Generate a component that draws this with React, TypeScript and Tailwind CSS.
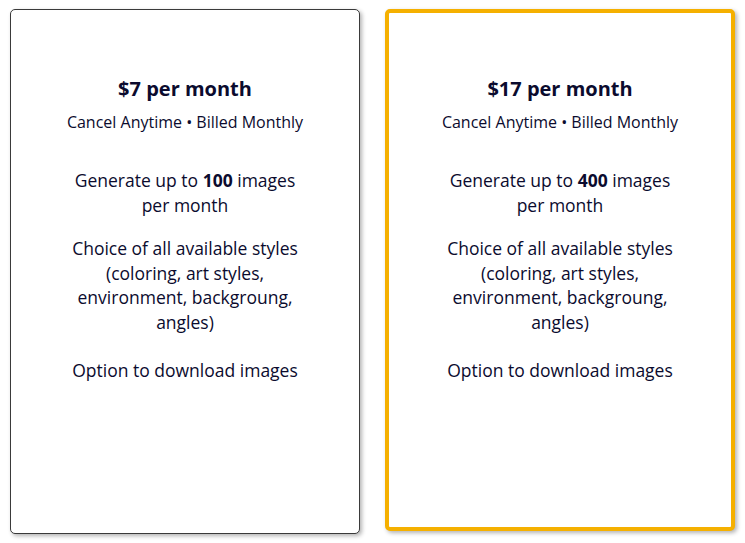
import React from "react";

type Plan = {
	price: string;
	images: string;
	highlighted?: boolean;
};

const PLANS: Plan[] = [
	{ price: "$7", images: "100" },
	{ price: "$17", images: "400", highlighted: true },
];

function PlanCard({ plan }: { plan: Plan }) {
	return (
		<div
			className={
				plan.highlighted
					? "flex h-[522px] w-[350px] flex-col items-center rounded-[5px] border-4 border-[#f5b000] bg-white pt-[62px] shadow-[2px_2px_4px_rgba(0,0,0,0.3)]"
					: "flex h-[525px] w-[350px] flex-col items-center rounded-[5px] border border-[#3a3a3a] bg-white pt-[65px] shadow-[2px_2px_4px_rgba(0,0,0,0.3)]"
			}
		>
			<h2 className="text-[20px] font-bold leading-[28px]">
				{plan.price} per month
			</h2>
			<p className="mt-[8px] text-[16px] leading-[22px]">
				Cancel Anytime • Billed Monthly
			</p>
			<div className="mt-[35px] flex w-[236px] flex-col items-center text-center text-[17.5px] leading-[24.5px]">
				<p>
					Generate up to <b>{plan.images}</b> images per month
				</p>
				<p className="mt-[19px]">
					Choice of all available styles (coloring, art styles, environment,
					backgroung, angles)
				</p>
				<p className="mt-[24px]">Option to download images</p>
			</div>
		</div>
	);
}

export default function App() {
	return (
		<div
			className="flex min-h-[543px] gap-[25px] bg-white pl-[10px] pt-[9px] text-[#0b0b2e]"
			style={{ fontFamily: '"Open Sans", sans-serif' }}
		>
			{PLANS.map((plan) => (
				<PlanCard key={plan.price} plan={plan} />
			))}
		</div>
	);
}
